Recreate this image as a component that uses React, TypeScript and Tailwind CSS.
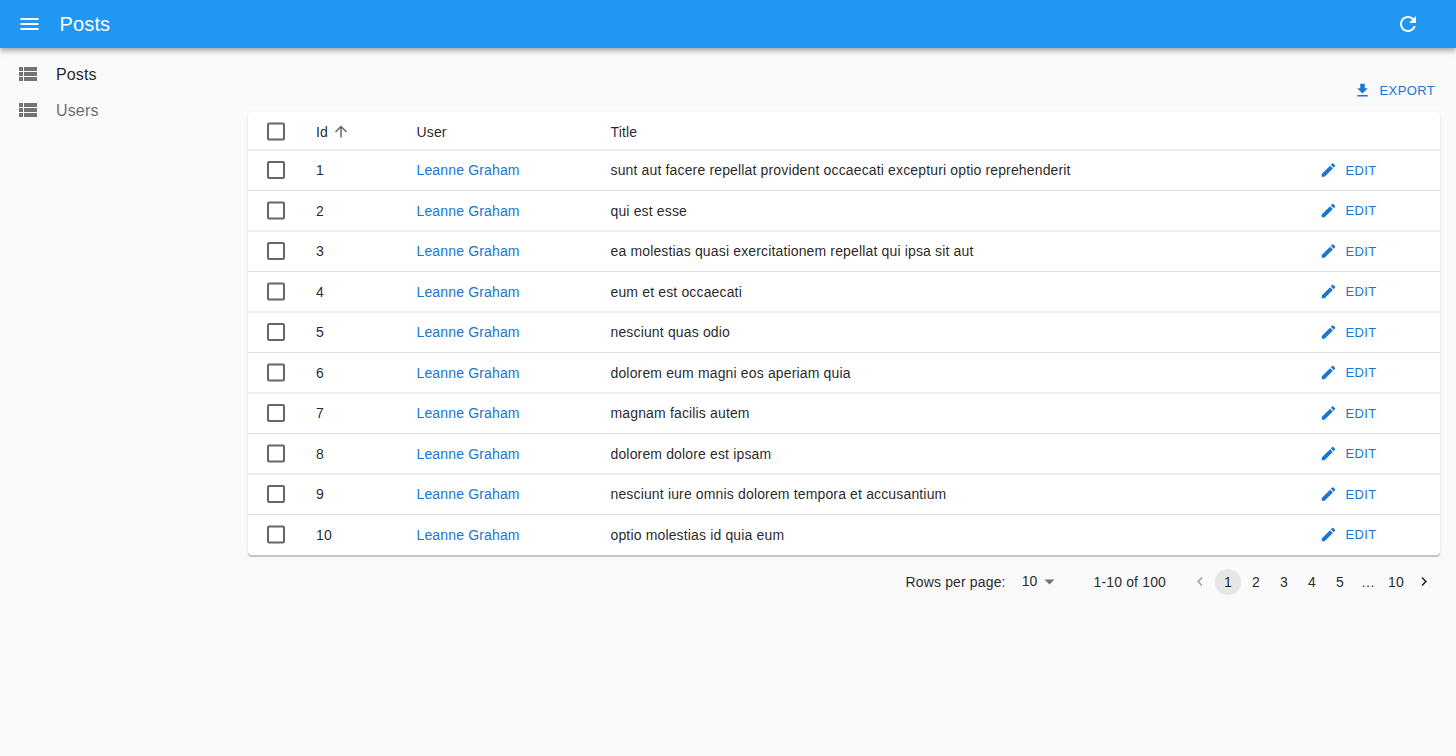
import type { ReactNode } from 'react';

const icons = {
  menu: 'M3 18h18v-2H3v2zm0-5h18v-2H3v2zm0-7v2h18V6H3z',
  refresh:
    'M17.65 6.35C16.2 4.9 14.21 4 12 4c-4.42 0-7.99 3.58-7.99 8s3.57 8 7.99 8c3.73 0 6.84-2.55 7.73-6h-2.08c-.82 2.33-3.04 4-5.65 4-3.31 0-6-2.69-6-6s2.69-6 6-6c1.66 0 3.14.69 4.22 1.78L13 11h7V4l-2.35 2.35z',
  list: 'M3 14h4v-4H3v4zm0 5h4v-4H3v4zM3 9h4V5H3v4zm5 5h13v-4H8v4zm0 5h13v-4H8v4zM8 5v4h13V5H8z',
  download: 'M19 9h-4V3H9v6H5l7 7 7-7zM5 18v2h14v-2H5z',
  edit: 'M3 17.25V21h3.75L17.81 9.94l-3.75-3.75L3 17.25zM20.71 7.04c.39-.39.39-1.02 0-1.41l-2.34-2.34c-.39-.39-1.02-.39-1.41 0l-1.83 1.83 3.75 3.75 1.83-1.83z',
  checkbox:
    'M19 5v14H5V5h14m0-2H5c-1.1 0-2 .9-2 2v14c0 1.1.9 2 2 2h14c1.1 0 2-.9 2-2V5c0-1.1-.9-2-2-2z',
  arrowUp: 'M4 12l1.41 1.41L11 7.83V20h2V7.83l5.58 5.59L20 12l-8-8-8 8z',
  dropDown: 'M7 10l5 5 5-5z',
  before: 'M15.41 7.41L14 6l-6 6 6 6 1.41-1.41L10.83 12z',
  next: 'M10 6L8.59 7.41 13.17 12l-4.58 4.59L10 18l6-6z',
};

function Icon({ name, className }: { name: keyof typeof icons; className: string }) {
  return (
    <svg viewBox="0 0 24 24" fill="currentColor" className={`shrink-0 ${className}`}>
      <path d={icons[name]} />
    </svg>
  );
}

const titles = [
  'sunt aut facere repellat provident occaecati excepturi optio reprehenderit',
  'qui est esse',
  'ea molestias quasi exercitationem repellat qui ipsa sit aut',
  'eum et est occaecati',
  'nesciunt quas odio',
  'dolorem eum magni eos aperiam quia',
  'magnam facilis autem',
  'dolorem dolore est ipsam',
  'nesciunt iure omnis dolorem tempora et accusantium',
  'optio molestias id quia eum',
];

const columns = 'grid grid-cols-[68px_100.5px_194px_709px_1fr] items-center';

function NavItem({ label, active }: { label: string; active?: boolean }) {
  return (
    <a className={`flex h-9 items-center pl-4 text-base tracking-[0.15px] ${active ? 'text-black/87' : 'text-black/60'}`}>
      <Icon name="list" className="mr-4 size-6 text-[#737373]" />
      <span className="pt-0.5">{label}</span>
    </a>
  );
}

function Row({ id, title }: { id: number; title: string }) {
  const even = id % 2 === 0;
  const last = id === titles.length;
  const edge = last
    ? 'h-10 pt-px pb-px'
    : even
      ? 'h-[41px] border-b-2 border-[#efefef] pt-px'
      : 'h-10 border-b border-[#e0e0e0] pb-px';
  return (
    <div className={`${columns} ${edge}`}>
      <Icon name="checkbox" className={`ml-4 size-6 text-black/60 ${even ? '-translate-y-[0.5px]' : ''}`} />
      <span>{id}</span>
      <a className="text-[#1976d2]">Leanne Graham</a>
      <span>{title}</span>
      <button
        className={`flex h-5 items-start text-[13px] tracking-[0.37px] text-[#1976d2] ${even ? 'leading-[19px]' : 'leading-[21px]'}`}
      >
        <Icon
          name="edit"
          className={`mt-px mr-2 size-[18px] -translate-x-[0.5px] ${even ? '-translate-y-[0.5px]' : ''}`}
        />
        EDIT
      </button>
    </div>
  );
}

function Page({ children, current }: { children: ReactNode; current?: boolean }) {
  return (
    <button className={`mx-px flex size-[26px] items-center justify-center rounded-full ${current ? 'bg-black/8' : ''}`}>
      {children}
    </button>
  );
}

export default function App() {
  return (
    <div className="flex h-[756px] w-[1456px] flex-col overflow-hidden bg-[#fafafa] font-['Liberation_Sans',Arial,sans-serif] text-sm/5 text-black/87">
      <header className="z-10 flex h-12 shrink-0 items-center bg-[#2196f3] pr-9 pl-[17.5px] text-white shadow-[0_2px_4px_-1px_rgba(0,0,0,0.2),0_4px_5px_0_rgba(0,0,0,0.14),0_1px_10px_0_rgba(0,0,0,0.12)]">
        <Icon name="menu" className="mr-[18px] size-6 -translate-x-[0.5px]" />
        <h1 className="flex-1 text-xl tracking-[0.15px]">Posts</h1>
        <Icon name="refresh" className="size-6" />
      </header>

      <div className="flex flex-1">
        <nav className="w-[248px] shrink-0 pt-2">
          <NavItem label="Posts" active />
          <NavItem label="Users" />
        </nav>

        <main className="w-[1192px] tracking-[0.15px]">
          <div className="flex h-16 items-end justify-end pr-[5px] pb-3">
            <button className="flex h-5 items-start text-[13px] leading-[21px] tracking-[0.37px] text-[#1976d2]">
              <Icon name="download" className="mt-px mr-2 size-[18px] -translate-x-[0.5px] translate-y-[0.5px]" />
              EXPORT
            </button>
          </div>

          <section className="rounded bg-white shadow-[0_2px_0_0_#c4c4c4,0_1px_3px_0_rgba(0,0,0,0.12)]">
            <div className={`${columns} h-[39px] border-b-2 border-[#efefef] pt-[3px]`}>
              <Icon name="checkbox" className="ml-4 size-6 -translate-y-[0.5px] text-black/60" />
              <span className="flex items-center">
                Id
                <Icon name="arrowUp" className="ml-1 size-[18px] -translate-y-[0.5px] text-black/60" />
              </span>
              <span>User</span>
              <span>Title</span>
            </div>
            {titles.map((title, i) => (
              <Row key={title} id={i + 1} title={title} />
            ))}
          </section>

          <div className="flex h-[54px] items-center justify-end pr-[2px]">
            <span>Rows per page:</span>
            <span className="ml-4 pb-0.5">10</span>
            <Icon name="dropDown" className="size-6 -translate-x-[0.5px] -translate-y-[0.5px] text-black/54" />
            <span className="ml-8">1-10 of 100</span>
            <div className="ml-5 flex items-center">
              <Page>
                <Icon name="before" className="size-[18px] -translate-y-[0.5px] text-black/38" />
              </Page>
              <Page current>1</Page>
              <Page>2</Page>
              <Page>3</Page>
              <Page>4</Page>
              <Page>5</Page>
              <Page>…</Page>
              <Page>10</Page>
              <Page>
                <Icon name="next" className="size-[18px] -translate-y-[0.5px]" />
              </Page>
            </div>
          </div>
        </main>
      </div>
    </div>
  );
}
